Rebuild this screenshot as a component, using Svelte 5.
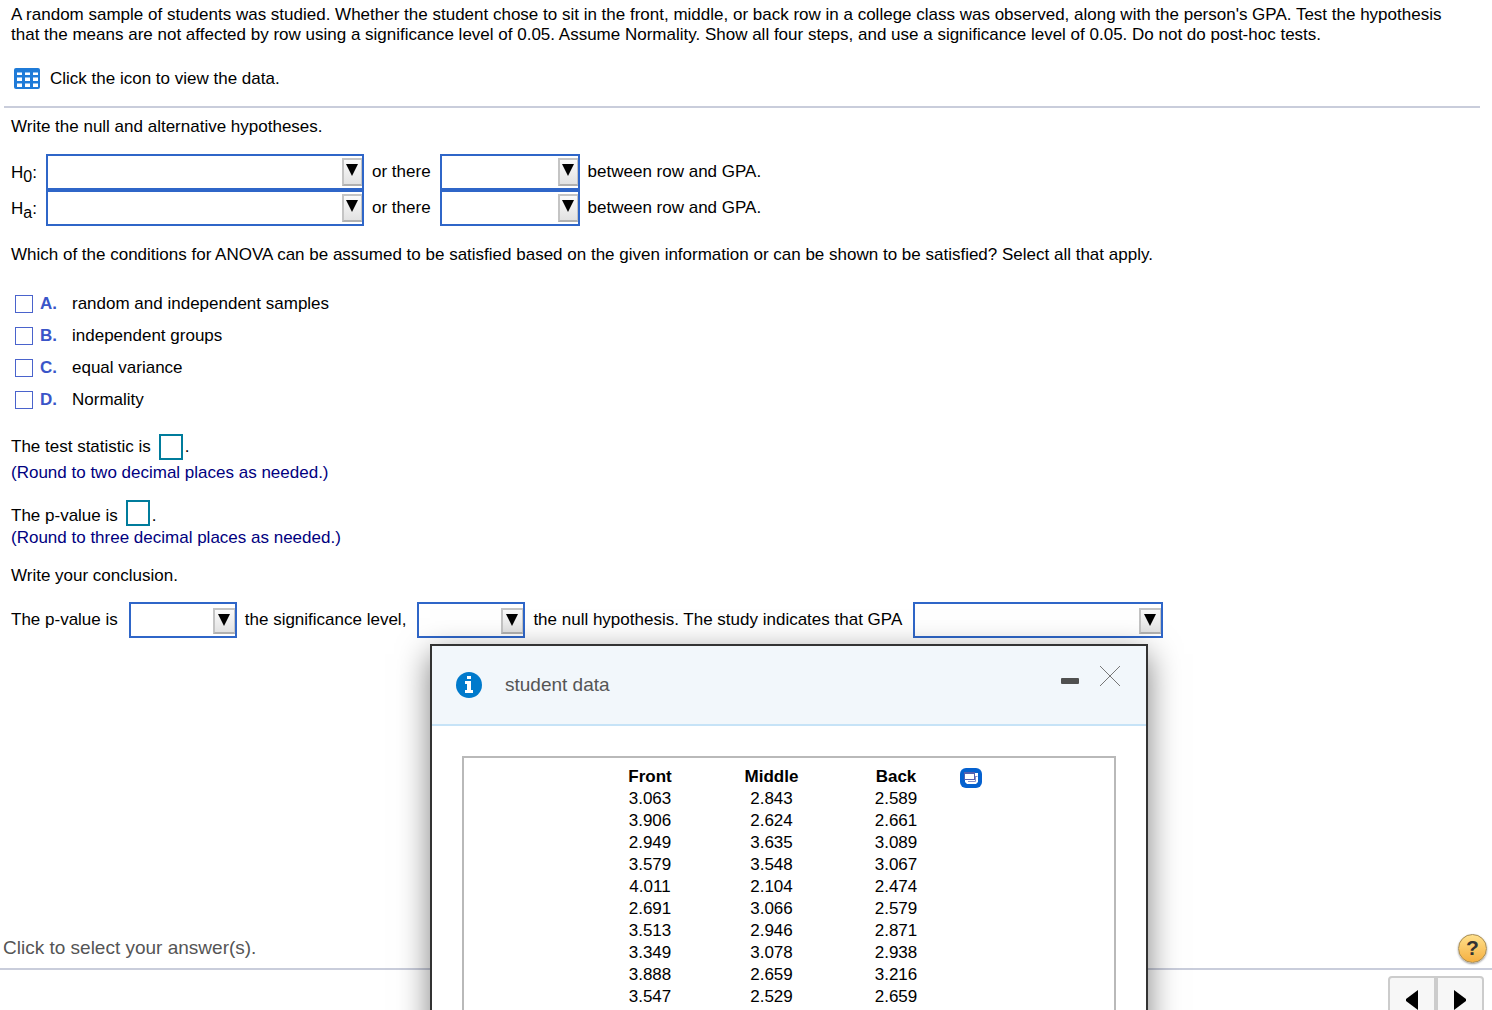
<script lang="ts">
  type Choice = { key: string; label: string };

  const choices: Choice[] = [
    { key: 'A', label: 'random and independent samples' },
    { key: 'B', label: 'independent groups' },
    { key: 'C', label: 'equal variance' },
    { key: 'D', label: 'Normality' },
  ];

  const hypotheses = ['0', 'a'];

  const rows = [
    ['3.063', '2.843', '2.589'],
    ['3.906', '2.624', '2.661'],
    ['2.949', '3.635', '3.089'],
    ['3.579', '3.548', '3.067'],
    ['4.011', '2.104', '2.474'],
    ['2.691', '3.066', '2.579'],
    ['3.513', '2.946', '2.871'],
    ['3.349', '3.078', '2.938'],
    ['3.888', '2.659', '3.216'],
    ['3.547', '2.529', '2.659'],
  ];

  let selected: string[] = $state([]);
  let statistic = $state('');
  let pValue = $state('');
  let showData = $state(true);
</script>

{#snippet dropdown(size: string, label: string)}
  <span class="dropdown {size}">
    <select aria-label={label}>
      <option value=""></option>
    </select>
    <span class="dropdown-arrow">
      <svg width="12" height="12" viewBox="0 0 12 12"><path d="M0 0H12L6 12Z" /></svg>
    </span>
  </span>
{/snippet}

<div class="page">
  <main>
    <p class="intro">
      A random sample of students was studied. Whether the student chose to sit in the front, middle, or back row in a
      college class was observed, along with the person's GPA. Test the hypothesis that the means are not affected by
      row using a significance level of 0.05. Assume Normality. Show all four steps, and use a significance level of
      0.05. Do not do post-hoc tests.
    </p>

    <div class="data-link">
      <button class="plain" aria-label="View the data" onclick={() => (showData = true)}>
        <svg width="26" height="22" viewBox="0 0 26 22">
          <rect width="26" height="21" rx="2" fill="#1f7bd8" />
          <path d="M3 4h5v3H3zM11 4h5v3h-5zM19 4h5v3h-5z" fill="#fff" />
          <path d="M3 9h5v4H3zM11 9h5v4h-5zM19 9h5v4h-5z" fill="#fff" />
          <path d="M3 15h5v4H3zM11 15h5v4h-5zM19 15h5v4h-5z" fill="#fff" />
          <path d="M3 4.500h21M3 9.500h21M3 15.500h21" stroke="#8fc0f0" stroke-width="1" />
          <path d="M9.500 2v17M17.500 2v17" stroke="#1f7bd8" stroke-width="3" />
        </svg>
      </button>
      <span>Click the icon to view the data.</span>
    </div>

    <hr />

    <p>Write the null and alternative hypotheses.</p>

    <div class="hypotheses">
      {#each hypotheses as sub}
        <div class="line">
          <span class="symbol">H<sub>{sub}</sub>:</span>
          {@render dropdown('wide', `H${sub} statement`)}
          <span>or there</span>
          {@render dropdown('medium', `H${sub} relationship`)}
          <span>between row and GPA.</span>
        </div>
      {/each}
    </div>

    <p>
      Which of the conditions for ANOVA can be assumed to be satisfied based on the given information or can be shown to
      be satisfied? Select all that apply.
    </p>

    <div class="choices">
      {#each choices as choice}
        <label>
          <input type="checkbox" value={choice.key} bind:group={selected} />
          <b>{choice.key}.</b>
          <span>{choice.label}</span>
        </label>
      {/each}
    </div>

    <div class="answer">
      <label>The test statistic is <input type="text" bind:value={statistic} /></label>.
    </div>
    <p class="hint">(Round to two decimal places as needed.)</p>

    <div class="answer second">
      <label>The p-value is <input type="text" bind:value={pValue} /></label>.
    </div>
    <p class="hint">(Round to three decimal places as needed.)</p>

    <p class="conclusion-title">Write your conclusion.</p>
    <div class="line conclusion">
      <span>The p-value is</span>
      {@render dropdown('small', 'p-value comparison')}
      <span>the significance level,</span>
      {@render dropdown('small', 'decision')}
      <span>the null hypothesis. The study indicates that GPA</span>
      {@render dropdown('large', 'conclusion')}
    </div>
  </main>

  <footer>
    <div class="status">
      <span>Click to select your answer(s).</span>
      <button class="help" aria-label="Help">?</button>
    </div>
    <div class="pager">
      <button aria-label="Previous">
        <svg width="12" height="20" viewBox="0 0 12 20"><path d="M12 0V20L0 11V9Z" /></svg>
      </button>
      <button aria-label="Next">
        <svg width="12" height="20" viewBox="0 0 12 20"><path d="M0 0V20L12 11V9Z" /></svg>
      </button>
    </div>
  </footer>

  {#if showData}
    <div class="dialog" role="dialog" aria-labelledby="dialog-title">
      <header>
        <svg width="26" height="26" viewBox="0 0 26 26">
          <circle cx="13" cy="13" r="13" fill="#007acc" />
          <path d="M11 4h4v3h-4zM9 9h6v9h2v3H9v-3h2v-6H9z" fill="#fff" />
        </svg>
        <h2 id="dialog-title">student data</h2>
        <button class="plain minimize" aria-label="Minimize">
          <svg width="18" height="6" viewBox="0 0 18 6"><rect width="18" height="6" rx="1" fill="#505050" /></svg>
        </button>
        <button class="plain close" aria-label="Close" onclick={() => (showData = false)}>
          <svg width="20" height="20" viewBox="0 0 20 20">
            <path d="M0 0L20 20M20 0L0 20" stroke="#777" stroke-width="1" />
          </svg>
        </button>
      </header>
      <div class="dialog-body">
        <div class="data-box">
          <table>
            <thead>
              <tr><th>Front</th><th>Middle</th><th>Back</th></tr>
            </thead>
            <tbody>
              {#each rows as row}
                <tr>
                  {#each row as value}
                    <td>{value}</td>
                  {/each}
                </tr>
              {/each}
            </tbody>
          </table>
          <button class="plain copy" aria-label="Copy data">
            <svg width="22" height="20" viewBox="0 0 22 20">
              <rect width="22" height="20" rx="6" fill="#0561cf" />
              <path d="M15 5h3v9l-2 2H7l-2-2v-2h10z" fill="#fff" />
              <rect x="4.500" y="5.500" width="10" height="6" fill="#fff" stroke="#5560b0" stroke-width="1" />
              <path d="M4 5h11" stroke="#5560b0" stroke-width="2" />
              <path d="M15 8.500h2.500M8 13.500h7.500v-5" fill="none" stroke="#8a90c8" stroke-width="1" />
            </svg>
          </button>
        </div>
      </div>
    </div>
  {/if}
</div>

<style>
  :global(body) {
    background: #fff;
  }

  .page {
    position: relative;
    display: flex;
    flex-direction: column;
    height: 100vh;
    overflow: hidden;
    font-family: 'Liberation Sans', Arial, sans-serif;
    font-size: 17px;
    line-height: 20px;
    color: #000;
  }

  main {
    flex: 1;
    padding: 5px 11px 0;
  }

  p {
    margin: 0;
  }

  button,
  input,
  select {
    font: inherit;
    margin: 0;
  }

  svg {
    display: block;
  }

  .plain {
    padding: 0;
    border: 0;
    background: none;
    cursor: pointer;
  }

  .intro {
    padding-right: 12px;
  }

  .data-link {
    display: flex;
    align-items: center;
    gap: 10px;
    height: 22px;
    margin-top: 23px;
    padding-left: 3px;
  }

  hr {
    height: 2px;
    margin: 16px 1px 9px -7px;
    border: 0;
    background: #c9cddb;
  }

  .hypotheses {
    margin: 17px 0 19px;
  }

  .line {
    display: flex;
    align-items: center;
    gap: 8px;
    white-space: nowrap;
  }

  .symbol {
    width: 27px;
    padding-top: 2px;
  }

  sub {
    font-size: 16px;
    line-height: 0;
    vertical-align: -4px;
  }

  .dropdown {
    position: relative;
    display: block;
    height: 36px;
  }

  .dropdown select {
    display: block;
    width: 100%;
    height: 100%;
    padding: 0 26px 0 6px;
    border: 2px solid #2f66c8;
    border-radius: 0;
    background: #fff;
    appearance: none;
  }

  .dropdown-arrow {
    position: absolute;
    top: 4px;
    right: 2px;
    box-sizing: border-box;
    width: 20px;
    height: 28px;
    padding: 4px 2px;
    border: 2px solid #c4c4c4;
    border-bottom-color: #b0b0b0;
    border-right-width: 1px;
    background: linear-gradient(#fafafa, #e2e2e2);
    pointer-events: none;
  }

  .wide {
    width: 318px;
  }

  .medium {
    width: 140px;
    margin-left: 1px;
  }

  .small {
    width: 108px;
  }

  .large {
    width: 250px;
  }

  .choices {
    margin: 23px 0 18px;
  }

  .choices label {
    display: flex;
    align-items: center;
    height: 32px;
    padding-left: 4px;
  }

  .choices input {
    width: 18px;
    height: 18px;
    margin-right: 7px;
    border: 1px solid #4a63cc;
    background: #fff;
    appearance: none;
  }

  .choices input:checked {
    background: #4a63cc;
  }

  .choices b {
    width: 32px;
    color: #3a55c8;
  }

  .answer,
  .answer label {
    display: flex;
    align-items: center;
  }

  .answer label {
    gap: 8px;
    margin-right: 2px;
  }

  .answer.second,
  .answer.second label {
    align-items: flex-end;
  }

  .answer.second {
    margin-top: 17px;
  }

  .answer input {
    box-sizing: border-box;
    width: 24px;
    height: 26px;
    padding: 0 2px;
    border: 2px solid #007c9c;
    background: #fff;
  }

  .hint {
    margin-top: 3px;
    color: #000080;
  }

  .answer.second + .hint {
    margin-top: 2px;
  }

  .conclusion-title {
    margin: 18px 0 16px;
  }

  .conclusion .dropdown {
    margin-left: 3px;
  }

  .conclusion .dropdown-arrow {
    top: 6px;
    width: 22px;
    height: 26px;
    padding: 4px 3px;
  }

  .status {
    display: flex;
    align-items: center;
    justify-content: space-between;
    height: 40px;
    padding: 0 5px 0 3px;
    border-bottom: 2px solid #c9cddb;
    font-size: 19px;
    color: #555;
  }

  .help {
    width: 29px;
    height: 29px;
    padding: 0;
    border: 1px solid #a58a52;
    border-radius: 50%;
    background: linear-gradient(#ffe08c, #f5b041);
    box-shadow: 0 1px 2px rgba(0, 0, 0, 0.4);
    font-size: 21px;
    font-weight: bold;
    line-height: 26px;
    color: #333;
  }

  .pager {
    display: flex;
    justify-content: flex-end;
    height: 34px;
    padding: 6px 8px 0;
    overflow: hidden;
  }

  .pager button {
    display: flex;
    align-items: center;
    justify-content: center;
    width: 48px;
    height: 48px;
    padding: 0;
    border: 2px solid #ccc;
    border-radius: 4px 0 0 0;
    background: #f7f7f7;
  }

  .pager button + button {
    border-radius: 0 4px 0 0;
  }

  .dialog {
    position: absolute;
    top: 644px;
    left: 430px;
    box-sizing: border-box;
    width: 718px;
    border: 2px solid #333;
    background: #fff;
    box-shadow: 0 10px 30px rgba(0, 0, 0, 0.5);
  }

  .dialog header {
    display: flex;
    align-items: center;
    height: 78px;
    padding: 0 26px 0 24px;
    border-bottom: 2px solid #c6e3f7;
    background: #f2f7fb;
  }

  .dialog h2 {
    flex: 1;
    margin: 0 0 0 23px;
    font-size: 19px;
    font-weight: normal;
    color: #555;
  }

  .minimize {
    padding-bottom: 8px;
  }

  .close {
    padding-bottom: 18px;
    margin-left: 21px;
  }

  .dialog-body {
    padding: 30px;
  }

  .data-box {
    display: flex;
    align-items: flex-start;
    justify-content: center;
    gap: 7px;
    padding: 8px 0;
    border: 2px solid #b9b9b9;
  }

  table {
    border-collapse: collapse;
    text-align: center;
    line-height: 22px;
  }

  th,
  td {
    width: 108px;
    padding: 0;
  }

  th:nth-child(2) {
    width: 135px;
  }

  th:nth-child(3) {
    width: 114px;
  }

  .copy {
    margin-top: 2px;
  }
</style>
